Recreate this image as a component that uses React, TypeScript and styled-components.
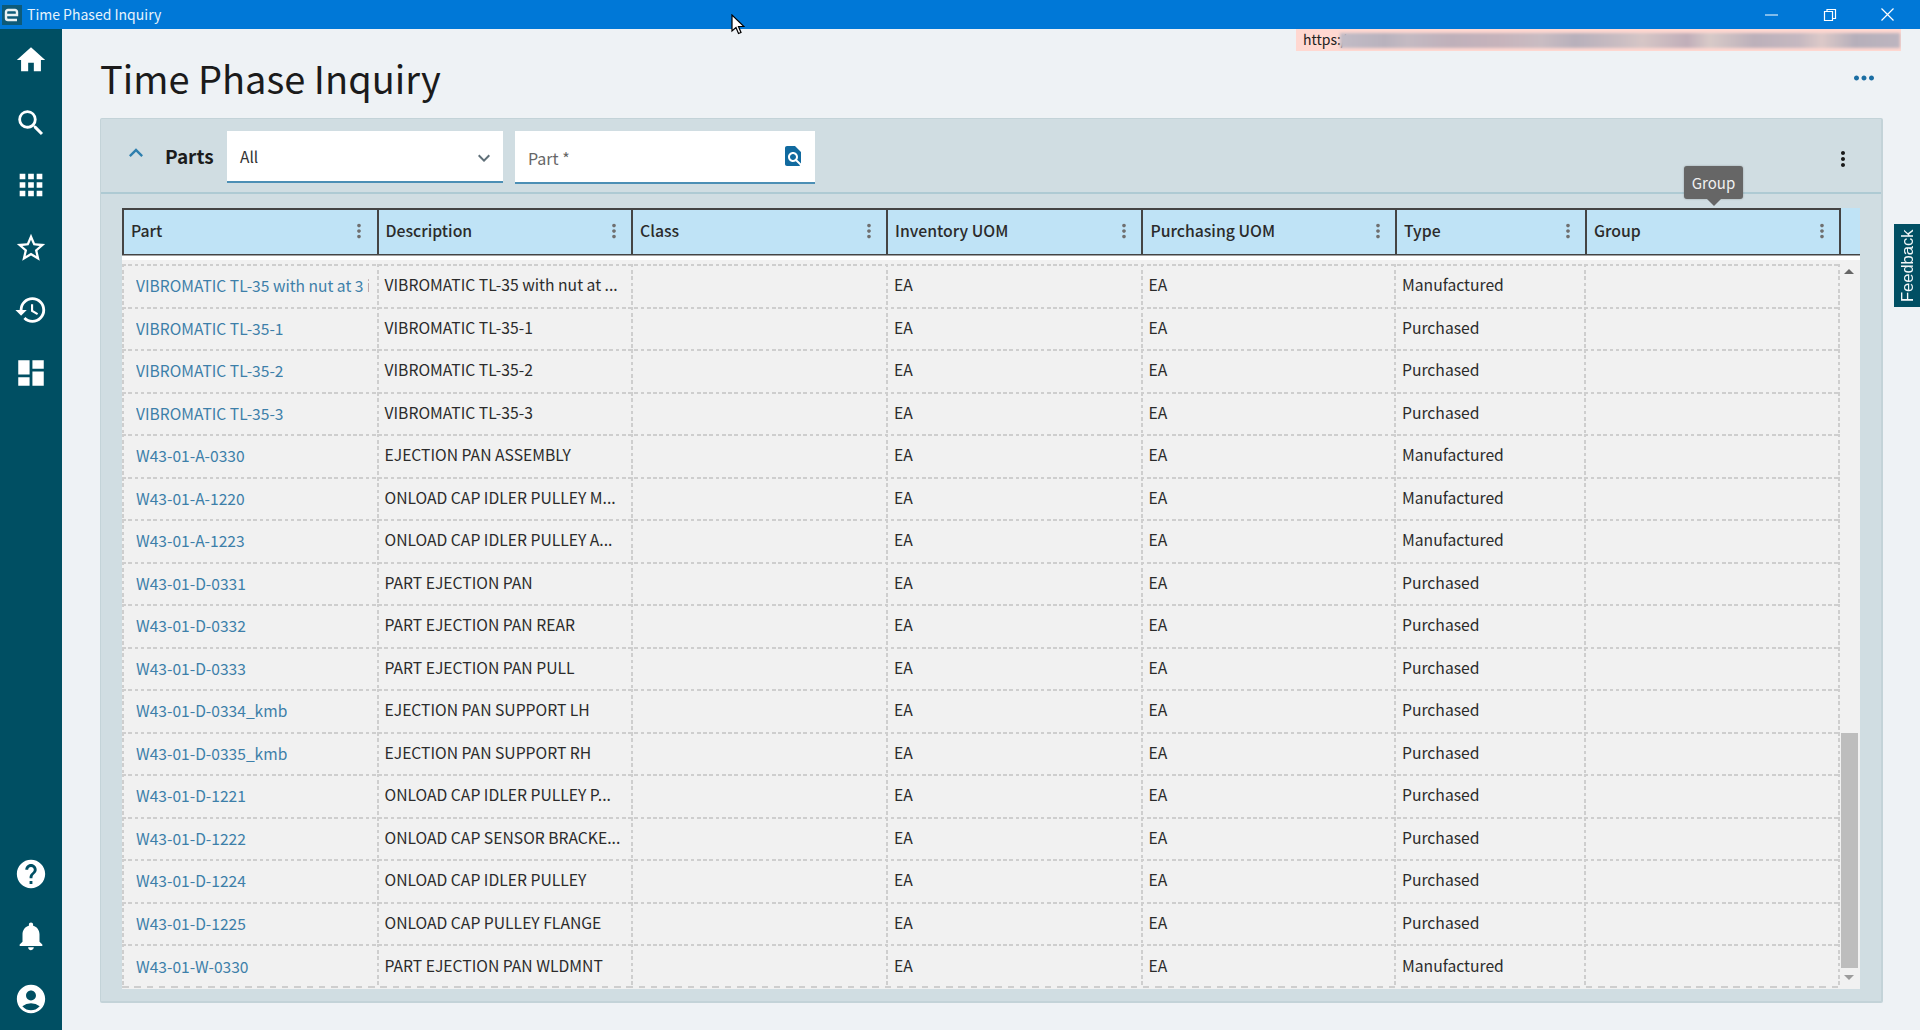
import React from 'react';
import styled, { createGlobalStyle } from 'styled-components';
import {
  MdHome, MdSearch, MdApps, MdStarBorder, MdHistory, MdDashboard, MdHelp,
  MdNotifications, MdAccountCircle, MdMoreVert, MdMoreHoriz, MdExpandLess,
  MdExpandMore, MdFindInPage,
} from 'react-icons/md';

const Global = createGlobalStyle`
  html, body { margin: 0; padding: 0; height: 100%; overflow: hidden; }
  body { font-family: "Noto Sans CJK SC", "Noto Sans", sans-serif; background: #eef2f5; }
  * { box-sizing: border-box; }
`;

const Page = styled.div`
  position: relative;
  width: 1920px;
  height: 1030px;
  display: flex;
  flex-direction: column;
  overflow: hidden;
`;
const TitleBar = styled.header`
  flex: 0 0 29px;
  height: 29px;
  background: #0078d7;
  display: flex;
  align-items: center;
  color: #fff;
  padding-left: 2px;
`;
const AppLogo = styled.svg`
  width: 20px;
  height: 20px;
  flex: none;
`;
const WindowTitle = styled.span`
  margin: 0 0 2px 5px;
  font: 400 14px "Noto Sans CJK SC", sans-serif;
  color: #e6f3fc;
  flex: 1;
`;
const WindowControls = styled.div`
  display: flex;
  align-items: center;
  gap: 42px;
  padding-right: 24px;
`;
const WindowIcon = styled.svg`
  width: 16px;
  height: 16px;
  display: block;
`;
const Body = styled.div`
  flex: 1;
  display: flex;
  min-height: 0;
`;
const Sidebar = styled.nav`
  flex: 0 0 62px;
  background: #004f63;
  display: flex;
  flex-direction: column;
  justify-content: space-between;
  color: #fff;
  padding: 14px 0 14px;
`;
const NavGroup = styled.div`
  display: flex;
  flex-direction: column;
  align-items: center;
  gap: 28.6px;
  svg { display: block; width: 34px; height: 34px; }
`;
const Main = styled.main`
  flex: 1;
  display: flex;
  flex-direction: column;
  padding: 0 37px 0 38px;
  min-width: 0;
`;
const TitleRow = styled.div`
  flex: 0 0 89px;
  display: flex;
  align-items: center;
  justify-content: space-between;
  padding-top: 7px;
`;
const PageTitle = styled.h1`
  margin: 0;
  font: 400 38px "Noto Sans CJK SC", sans-serif;
  color: #1b1b1b;
`;
const MoreButton = styled.span`
  color: #1b6ea3;
  display: flex;
  margin: 2px 4px 0 0;
  svg { width: 30px; height: 30px; display: block; }
`;
const Panel = styled.section`
  flex: 0 0 885px;
  background: #d0dde2;
  border: 1px solid #c3d3d8;
  border-width: 1px 2px 2px 1px;
  border-radius: 2px;
  display: flex;
  flex-direction: column;
`;
const PanelHeader = styled.div`
  flex: 0 0 75px;
  display: flex;
  align-items: flex-start;
  padding: 12px 21px 0 21px;
  border-bottom: 2px solid #aecad3;
  position: relative;
`;
const Collapse = styled.span`
  color: #2e7fae;
  width: 28px;
  margin-top: 8px;
  svg { width: 28px; height: 28px; display: block; }
`;
const PanelName = styled.span`
  margin-left: 15px;
  width: 62px;
  margin-top: 11px;
  font: 700 19px/28px "Noto Sans CJK SC", sans-serif;
  color: #1c1c1c;
`;
const SelectField = styled.div`
  width: 276px;
  height: 52px;
  background: #fff;
  border-bottom: 2px solid #4c8fb5;
  display: flex;
  align-items: center;
  justify-content: space-between;
  padding: 0 7px 0 13px;
  font-size: 15.5px;
  color: #333;
  svg { width: 24px; height: 24px; color: #5f6f78; margin-top: 4px; }
`;
const SearchField = styled.div`
  margin-left: 12px;
  width: 300px;
  height: 53px;
  background: #fff;
  border-bottom: 2px solid #4c8fb5;
  display: flex;
  align-items: center;
  justify-content: space-between;
  padding: 2px 10px 0 13px;
  font-size: 16px;
  color: #666;
  svg { width: 24px; height: 24px; color: #116a9f; margin-bottom: 4px; }
`;
const PanelKebab = styled.span`
  margin-left: auto;
  margin-top: 16px;
  margin-right: 5px;
  color: #1a1a1a;
  svg { width: 24px; height: 24px; display: block; }
`;
const TableArea = styled.div`
  flex: 1;
  padding: 13.5px 21px 12.5px 21px;
  min-height: 0;
  display: flex;
  flex-direction: column;
  position: relative;
`;
const HeaderRow = styled.div`
  display: grid;
  grid-template-columns: 256.5px 254.5px 255px 255.4px 253.6px 190px 253.6px 19.400px;
  height: 48px;
  background: #bfe3f6;
`;
const HeadCell = styled.div`
  border-top: 2px solid #444;
  border-bottom: 2px solid #444;
  border-right: 2px solid #444;
  display: flex;
  align-items: center;
  justify-content: space-between;
  padding: 0 6px 2px 7px;
  font: 500 15.8px "Noto Sans CJK SC", sans-serif;
  color: #2b2b2b;
  &:first-child { border-left: 2px solid #444; padding-right: 7px; }
  svg { width: 22px; height: 22px; color: #6f6f6f; }
`;
const HeadFiller = styled.div`
  border-bottom: 2px solid #444;
`;
const TableBody = styled.div`
  position: relative;
  margin-top: 4.5px;
  flex: 1;
  background: #f1f1f1;
  padding-top: 4px;
  box-shadow: 0 -4.500px 0 #fff;
  min-height: 0;
`;
const RowList = styled.div`
  width: 1717.500px;
`;
const hDots = 'repeating-linear-gradient(90deg, #cecece 0 3.500px, transparent 3.500px 6.250px)';
const vDots = 'repeating-linear-gradient(180deg, #cecece 0 3.500px, transparent 3.500px 6.250px)';
const hDashes = 'repeating-linear-gradient(90deg, #cecece 0 6.500px, transparent 6.500px 12.300px)';
const DataRow = styled.div`
  display: grid;
  grid-template-columns: 256.5px 254.5px 255px 254.5px 253.5px 190px 253.5px;
  height: 42.5px;
  background: ${hDots} left top / 100% 2px no-repeat;
  &:last-child {
    height: 44px;
    background:
      ${hDots} left top / 100% 2px no-repeat,
      ${hDashes} left bottom / 100% 2px no-repeat;
  }
`;
const Cell = styled.div`
  background: ${vDots} right top / 2px 100% no-repeat;
  padding: 0 6px 1px 6px;
  display: flex;
  align-items: center;
  font-size: 15.7px;
  color: #2b2b2b;
  white-space: nowrap;
  overflow: hidden;
  min-width: 0;
`;
const LinkCell = styled(Cell)`
  background:
    ${vDots} right top / 2px 100% no-repeat,
    ${vDots} left top / 2px 100% no-repeat;
  padding: 0 9.2px 0 14px;
  font-size: 15.6px;
  color: #3d7fa9;
`;
const ClippedText = styled.span`
  overflow: hidden;
`;
const Track = styled.div`
  position: absolute;
  top: 0;
  bottom: 0;
  right: 0;
  width: 20px;
`;
const Thumb = styled.div`
  position: absolute;
  left: 1px;
  width: 16.7px;
  top: 472.5px;
  height: 235px;
  background: #bdbdbd;
`;
const Arrow = styled.div<{ $down?: boolean }>`
  position: absolute;
  left: 4px;
  width: 0;
  height: 0;
  border-left: 5px solid transparent;
  border-right: 5px solid transparent;
  ${(p) =>
    p.$down
      ? 'bottom: 8.500px; border-top: 5px solid #9c9c9c;'
      : 'top: 8.500px; border-bottom: 5px solid #666;'}
`;
const Tooltip = styled.div`
  position: absolute;
  left: 1684px;
  top: 166px;
  width: 59px;
  height: 33px;
  background: #666;
  border-radius: 3px;
  color: #f0f0f0;
  font-size: 15px;
  display: flex;
  align-items: center;
  justify-content: center;
  box-shadow: 0 0 2px rgba(0,0,0,.3);
  &::after {
    content: '';
    position: absolute;
    left: 23px;
    bottom: -7px;
    border-left: 7px solid transparent;
    border-right: 7px solid transparent;
    border-top: 7px solid #666;
  }
`;
const UrlBanner = styled.div`
  position: absolute;
  left: 1296px;
  top: 29px;
  width: 605px;
  height: 22px;
  background: #ffd8d1;
  padding-left: 7px;
  font-size: 14px;
  line-height: 21px;
  color: #222;
  overflow: hidden;
`;
const Redaction = styled.div`
  position: absolute;
  left: 44px;
  top: 4px;
  right: 1px;
  height: 15px;
  filter: blur(1.500px);
  background: linear-gradient(90deg, #c2bcc6 0%, #b9b2bd 8%, #c4bac2 12%, #bfb0ba 20%, #c6b3bb 28%, #c9bcc2 36%, #b8b0bb 42%, #cabdc2 50%, #d6c6c6 54%, #c0aeb9 62%, #d8cac8 66%, #bcb0ba 74%, #c5b8c0 82%, #dcc9c8 86%, #b6afba 92%, #bdb5bf 100%);
`;
const FeedbackTab = styled.div`
  position: absolute;
  right: 0;
  top: 224px;
  width: 26px;
  height: 83px;
  background: #004f63;
  color: #f2f7f8;
  font: 400 16.5px "Liberation Sans", sans-serif;
  writing-mode: vertical-rl;
  transform: rotate(180deg);
  display: flex;
  align-items: center;
  justify-content: center;
`;
const Cursor = styled.svg`
  position: absolute;
  left: 731px;
  top: 14px;
  width: 14px;
  height: 21px;
`;

const rows: [string, string, string][] = [
  ['VIBROMATIC TL-35 with nut at 3 in', 'VIBROMATIC TL-35 with nut at ...', 'Manufactured'],
  ['VIBROMATIC TL-35-1', 'VIBROMATIC TL-35-1', 'Purchased'],
  ['VIBROMATIC TL-35-2', 'VIBROMATIC TL-35-2', 'Purchased'],
  ['VIBROMATIC TL-35-3', 'VIBROMATIC TL-35-3', 'Purchased'],
  ['W43-01-A-0330', 'EJECTION PAN ASSEMBLY', 'Manufactured'],
  ['W43-01-A-1220', 'ONLOAD CAP IDLER PULLEY M...', 'Manufactured'],
  ['W43-01-A-1223', 'ONLOAD CAP IDLER PULLEY A...', 'Manufactured'],
  ['W43-01-D-0331', 'PART EJECTION PAN', 'Purchased'],
  ['W43-01-D-0332', 'PART EJECTION PAN REAR', 'Purchased'],
  ['W43-01-D-0333', 'PART EJECTION PAN PULL', 'Purchased'],
  ['W43-01-D-0334_kmb', 'EJECTION PAN SUPPORT LH', 'Purchased'],
  ['W43-01-D-0335_kmb', 'EJECTION PAN SUPPORT RH', 'Purchased'],
  ['W43-01-D-1221', 'ONLOAD CAP IDLER PULLEY P...', 'Purchased'],
  ['W43-01-D-1222', 'ONLOAD CAP SENSOR BRACKE...', 'Purchased'],
  ['W43-01-D-1224', 'ONLOAD CAP IDLER PULLEY', 'Purchased'],
  ['W43-01-D-1225', 'ONLOAD CAP PULLEY FLANGE', 'Purchased'],
  ['W43-01-W-0330', 'PART EJECTION PAN WLDMNT', 'Manufactured'],
];
const headers = ['Part', 'Description', 'Class', 'Inventory UOM', 'Purchasing UOM', 'Type', 'Group'];

export default function App() {
  return (
    <Page>
      <Global />
      <TitleBar>
        <AppLogo viewBox="0 0 20 20">
          <rect width="20" height="20" fill="#0d5a78" />
          <path d="M4 10h11V7a2 2 0 0 0-2-2H6a2 2 0 0 0-2 2v6a2 2 0 0 0 2 2h9" fill="none" stroke="#e8f0f3" strokeWidth="2.4" />
        </AppLogo>
        <WindowTitle>Time Phased Inquiry</WindowTitle>
        <WindowControls>
          <WindowIcon viewBox="0 0 16 16"><path d="M1 8h13" stroke="#fff" strokeWidth="1" /></WindowIcon>
          <WindowIcon viewBox="0 0 16 16"><path d="M2.5 4.5h8v9h-8zM5 4.500V2.500h8.500v9H10.500" fill="none" stroke="#fff" strokeWidth="1.200" /></WindowIcon>
          <WindowIcon viewBox="0 0 16 16"><path d="M1.500 1.500l12 12M13.500 1.500l-12 12" stroke="#fff" strokeWidth="1.200" /></WindowIcon>
        </WindowControls>
      </TitleBar>
      <Body>
        <Sidebar>
          <NavGroup>
            <MdHome /><MdSearch /><MdApps /><MdStarBorder /><MdHistory /><MdDashboard />
          </NavGroup>
          <NavGroup>
            <MdHelp /><MdNotifications /><MdAccountCircle />
          </NavGroup>
        </Sidebar>
        <Main>
          <TitleRow>
            <PageTitle>Time Phase Inquiry</PageTitle>
            <MoreButton><MdMoreHoriz /></MoreButton>
          </TitleRow>
          <Panel>
            <PanelHeader>
              <Collapse><MdExpandLess /></Collapse>
              <PanelName>Parts</PanelName>
              <SelectField>All<MdExpandMore /></SelectField>
              <SearchField>Part *<MdFindInPage /></SearchField>
              <PanelKebab><MdMoreVert /></PanelKebab>
            </PanelHeader>
            <TableArea>
              <HeaderRow>
                {headers.map((h) => (
                  <HeadCell key={h}>{h}<MdMoreVert /></HeadCell>
                ))}
                <HeadFiller />
              </HeaderRow>
              <TableBody>
                <RowList>
                  {rows.map(([part, desc, type]) => (
                    <DataRow key={part}>
                      <LinkCell><ClippedText>{part}</ClippedText></LinkCell>
                      <Cell>{desc}</Cell>
                      <Cell />
                      <Cell>EA</Cell>
                      <Cell>EA</Cell>
                      <Cell>{type}</Cell>
                      <Cell />
                    </DataRow>
                  ))}
                </RowList>
                <Track>
                  <Arrow />
                  <Thumb />
                  <Arrow $down />
                </Track>
              </TableBody>
            </TableArea>
          </Panel>
        </Main>
      </Body>
      <UrlBanner>https:/<Redaction /></UrlBanner>
      <Tooltip>Group</Tooltip>
      <FeedbackTab>Feedback</FeedbackTab>
      <Cursor viewBox="0 0 14 21">
        <path d="M1 1v16l4-3.500 2.500 6 2.500-1-2.500-6H13z" fill="#fff" stroke="#000" strokeWidth="1.200" />
      </Cursor>
    </Page>
  );
}
